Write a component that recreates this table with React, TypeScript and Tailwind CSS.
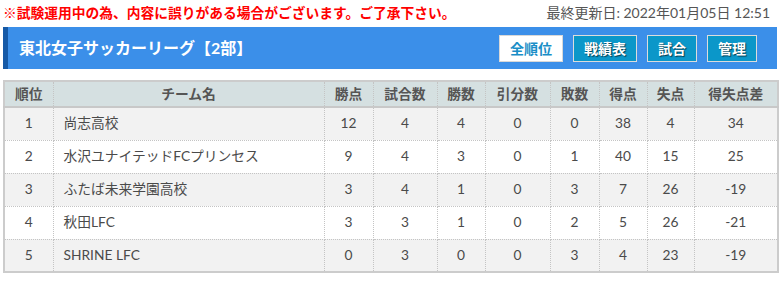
import React from "react";

const rows = [
  ["1", "尚志高校", "12", "4", "4", "0", "0", "38", "4", "34"],
  ["2", "水沢ユナイテッドFCプリンセス", "9", "4", "3", "0", "1", "40", "15", "25"],
  ["3", "ふたば未来学園高校", "3", "4", "1", "0", "3", "7", "26", "-19"],
  ["4", "秋田LFC", "3", "3", "1", "0", "2", "5", "26", "-21"],
  ["5", "SHRINE LFC", "0", "3", "0", "0", "3", "4", "23", "-19"],
];

const headers = ["順位", "チーム名", "勝点", "試合数", "勝数", "引分数", "敗数", "得点", "失点", "得失点差"];
const widths = [49, 271, 49, 64, 48, 65, 49, 48, 47, 84];

export default function App() {
  return (
    <div
      className="w-[784px] h-[281px] bg-white pl-[3px] pr-[7px]"
      style={{ fontFamily: "Lato, 'Noto Sans CJK JP', sans-serif" }}
    >
      <div className="flex justify-between items-center h-[25px]">
        <span className="text-[13.75px] font-bold text-[#ff0000] leading-none">
          ※試験運用中の為、内容に誤りがある場合がございます。ご了承下さい。
        </span>
        <span className="text-[14px] text-[#555] leading-none mr-[7px]">
          最終更新日: 2022年01月05日 12:51
        </span>
      </div>
      <div className="mt-[2px] h-[42px] w-[774px] bg-[#3b8fe9] border-l-[5px] border-[#1559a6] flex items-center justify-between pl-[11px] pr-[20px]">
        <span className="text-white font-bold text-[16px] leading-none">東北女子サッカーリーグ【2部】</span>
        <div className="flex gap-[10px]">
          <div className="w-[64px] h-[27px] bg-white border border-[#d8d8d8] flex items-center justify-center text-[14px] font-bold text-[#1a8ec7]">
            全順位
          </div>
          <div className="w-[64px] h-[27px] bg-[#0b97c9] border border-[#dcdcdc] flex items-center justify-center text-[14px] font-bold text-white [text-shadow:1px_1px_1px_rgba(0,0,0,0.6)]">
            戦績表
          </div>
          <div className="w-[50px] h-[27px] bg-[#0b97c9] border border-[#dcdcdc] flex items-center justify-center text-[14px] font-bold text-white [text-shadow:1px_1px_1px_rgba(0,0,0,0.6)]">
            試合
          </div>
          <div className="w-[50px] h-[27px] bg-[#0b97c9] border border-[#dcdcdc] flex items-center justify-center text-[14px] font-bold text-white [text-shadow:1px_1px_1px_rgba(0,0,0,0.6)]">
            管理
          </div>
        </div>
      </div>
      <table className="mt-[11px] w-[774px] border-collapse table-fixed border-2 border-[#cccccc] text-[13.75px] text-[#4a4a4a]">
        <colgroup>
          {widths.map((w, i) => (
            <col key={i} style={{ width: w }} />
          ))}
        </colgroup>
        <thead>
          <tr className="bg-[#d5e0e1] h-[26px] border-b-2 border-[#c8c8c8]">
            {headers.map((h, i) => (
              <th
                key={i}
                className="font-bold text-[#555] text-center border-l border-dotted border-[#c4c4c4] first:border-l-0 p-0"
              >
                {h}
              </th>
            ))}
          </tr>
        </thead>
        <tbody>
          {rows.map((r, ri) => (
            <tr key={ri} className={`h-[33px] ${ri % 2 === 0 ? "bg-[#f2f2f2]" : "bg-white"}`}>
              {r.map((c, ci) => (
                <td
                  key={ci}
                  className={`border border-dotted border-[#c4c4c4] p-0 ${
                    ci === 1 ? "text-left pl-[10px]" : "text-center"
                  }`}
                >
                  {c}
                </td>
              ))}
            </tr>
          ))}
        </tbody>
      </table>
    </div>
  );
}
